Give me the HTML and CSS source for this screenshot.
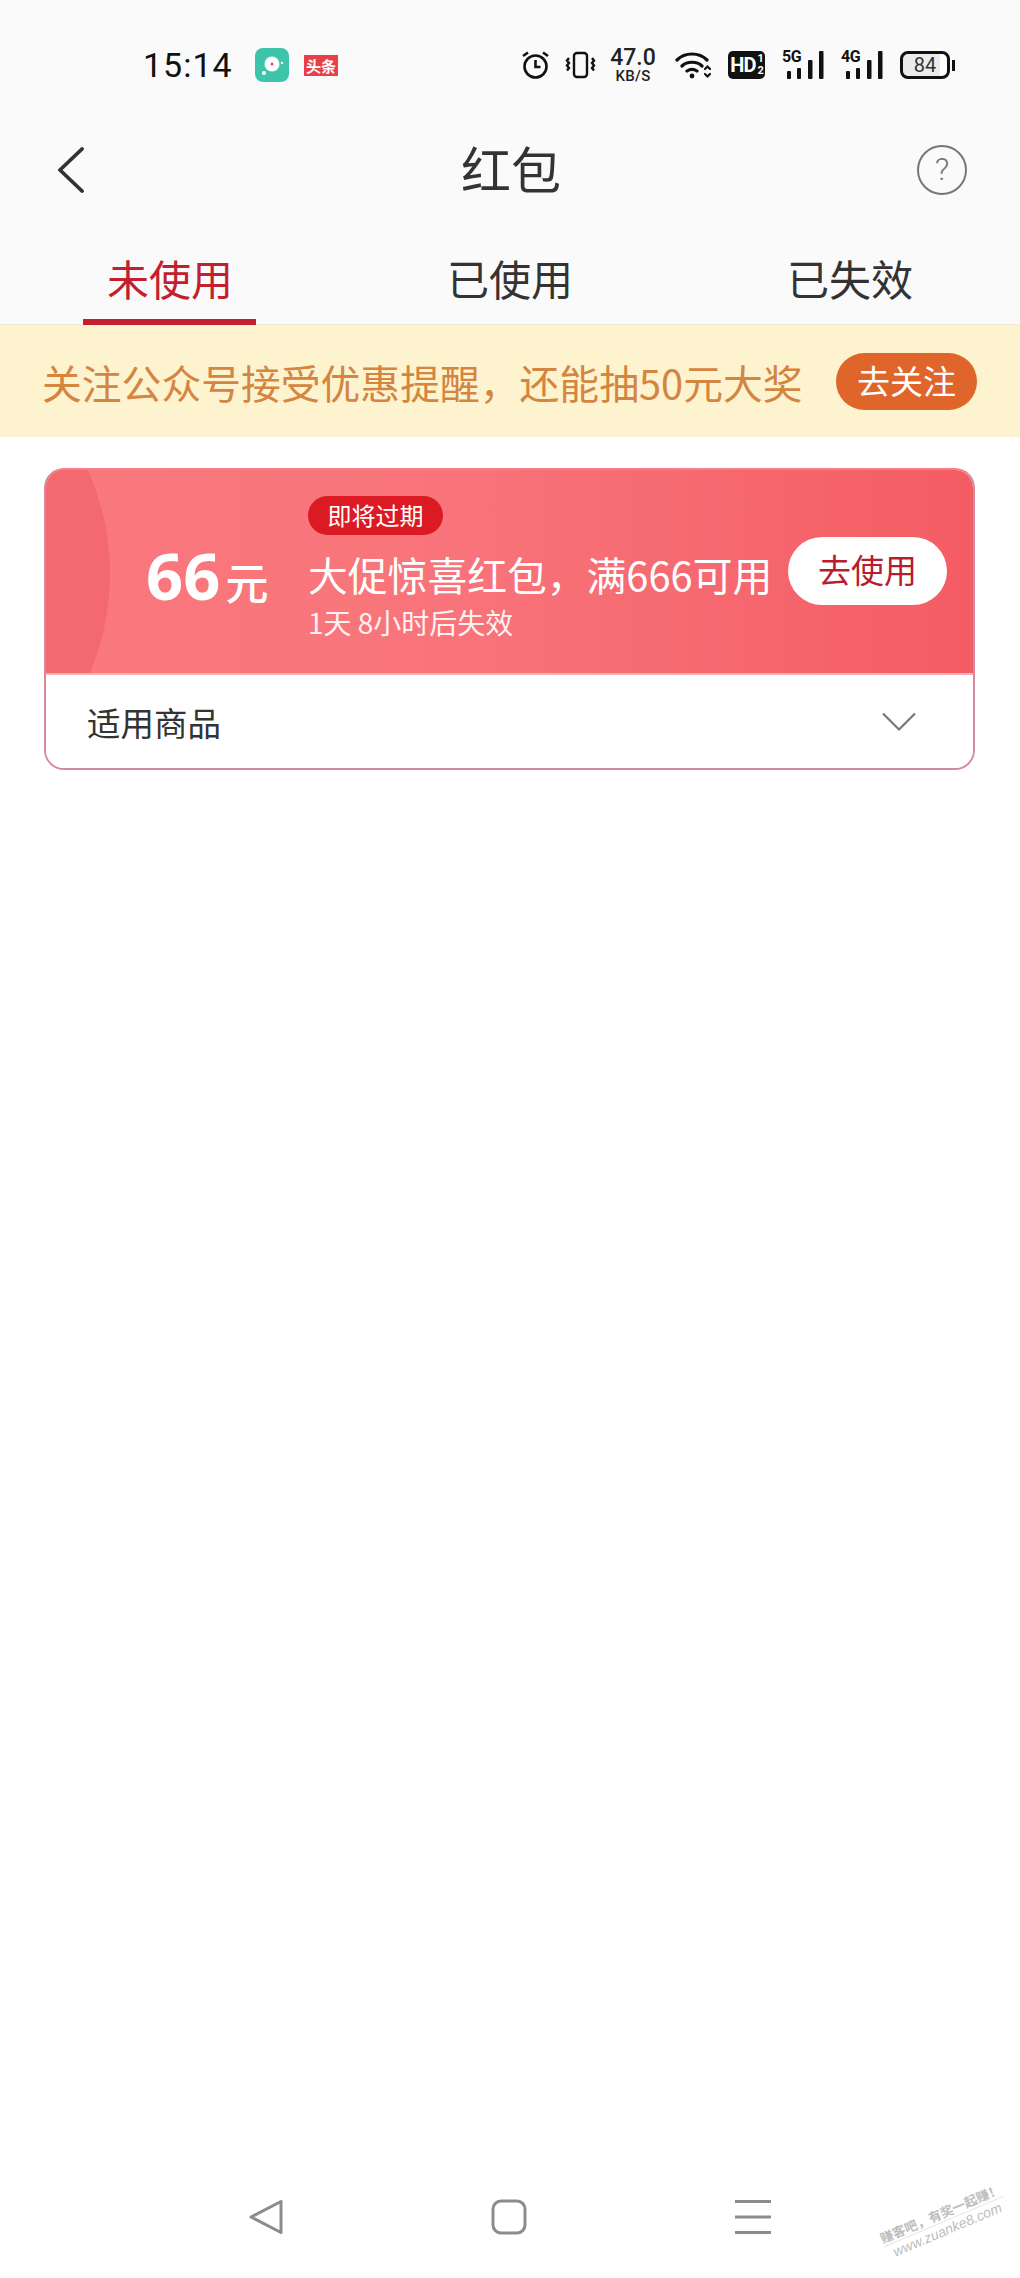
FILE: index.html
```html
<!DOCTYPE html>
<html lang="zh-CN">
<head>
    <meta charset="UTF-8">
    <meta name="viewport" content="width=device-width, initial-scale=1.0">
    <title>红包</title>
    <link rel="stylesheet" href="styles.css">
</head>
<body>
    <div class="page">
        <div class="header">
            <div class="status-bar">
                <div class="time">15:14</div>
                <svg class="app-icon" width="34" height="34" viewBox="0 0 34 34">
                    <rect width="34" height="34" rx="8" fill="#3fc4ac"/>
                    <circle cx="17" cy="16" r="7.5" fill="#fff"/>
                    <circle cx="17" cy="16" r="1.5" fill="#d9534f"/>
                    <circle cx="9" cy="25" r="2" fill="#fff"/>
                    <circle cx="27" cy="15" r="1.2" fill="#fff"/>
                </svg>
                <div class="news-tag">头条</div>
                <div class="status-icons">
                    <svg width="29" height="28" viewBox="0 0 29 28" fill="none" stroke="#111" stroke-width="2.6">
                        <circle cx="14.5" cy="15.5" r="11"/>
                        <path d="M14.5 9v7h5M2 5l5-3.500M27 5l-5-3.500"/>
                    </svg>
                    <svg width="31" height="28" viewBox="0 0 31 28" fill="none" stroke="#111" stroke-width="2.4">
                        <rect x="9" y="2" width="13" height="24" rx="3"/>
                        <path d="M4 7l-2 2.500 2 2.500-2 2.500 2 2.500-2 2.500M27 7l2 2.500-2 2.500 2 2.500-2 2.500 2 2.500"/>
                    </svg>
                    <div class="speed"><span class="speed-num">47.0</span><span class="speed-unit">KB/S</span></div>
                    <svg class="wifi" width="38" height="28" viewBox="0 0 38 28" fill="none" stroke="#111" stroke-width="3.2" stroke-linecap="round">
                        <path d="M2 9c8-8 22-8 30 0M7 15c5-5 15-5 20 0M12 20c3-2 7-2 10 0"/>
                        <circle cx="17" cy="25" r="2.400" fill="#111" stroke="none"/>
                        <path d="M30 18l2.500-2.500 2.500 2.500M30 23l2.500 2.500 2.500-2.500" stroke-width="2.200"/>
                    </svg>
                    <div class="hd-badge">HD<span class="hd-nums"><span>1</span><span>2</span></span></div>
                    <div class="signal">
                        <span class="signal-label">5G</span>
                        <svg width="42" height="28" viewBox="0 0 42 28" fill="#111">
                            <rect x="5" y="20" width="4" height="8" rx="1"/>
                            <rect x="15" y="17" width="4" height="11" rx="1"/>
                            <rect x="26" y="9" width="4.500" height="19" rx="1"/>
                            <rect x="37" y="0" width="4.500" height="28" rx="1"/>
                        </svg>
                    </div>
                    <div class="signal">
                        <span class="signal-label">4G</span>
                        <svg width="42" height="28" viewBox="0 0 42 28" fill="#111">
                            <rect x="5" y="20" width="4" height="8" rx="1"/>
                            <rect x="15" y="17" width="4" height="11" rx="1"/>
                            <rect x="26" y="9" width="4.500" height="19" rx="1"/>
                            <rect x="37" y="0" width="4.500" height="28" rx="1"/>
                        </svg>
                    </div>
                    <div class="battery"><div class="battery-body">84</div><div class="battery-nub"></div></div>
                </div>
            </div>
            <div class="title-bar">
                <svg class="back-icon" width="26" height="46" viewBox="0 0 26 46" fill="none" stroke="#333" stroke-width="3.800" stroke-linecap="round" stroke-linejoin="round">
                    <path d="M24 2L2 23l22 21"/>
                </svg>
                <div class="page-title">红包</div>
                <div class="help-icon">?</div>
            </div>
            <div class="tabs">
                <div class="tab active">未使用</div>
                <div class="tab">已使用</div>
                <div class="tab">已失效</div>
            </div>
        </div>

        <div class="notice">
            <div class="notice-text">关注公众号接受优惠提醒，还能抽50元大奖</div>
            <div class="notice-btn">去关注</div>
        </div>

        <div class="coupon">
            <div class="coupon-main">
                <div class="coupon-arc"></div>
                <div class="amount"><span class="amount-num">66</span><span class="amount-unit">元</span></div>
                <div class="coupon-info">
                    <div class="expire-tag">即将过期</div>
                    <div class="coupon-name">大促惊喜红包，满666可用</div>
                    <div class="coupon-time">1天 8小时后失效</div>
                </div>
                <div class="use-btn">去使用</div>
            </div>
            <div class="coupon-foot">
                <span>适用商品</span>
                <svg width="34" height="20" viewBox="0 0 34 20" fill="none" stroke="#777" stroke-width="2.200">
                    <path d="M1 1.500l16 16 16-16"/>
                </svg>
            </div>
        </div>

        <div class="nav-bar">
            <svg width="34" height="36" viewBox="0 0 34 36" fill="none" stroke="#8c8c8c" stroke-width="3" stroke-linejoin="round">
                <path d="M32 2.500v31L2 18z"/>
            </svg>
            <svg width="36" height="36" viewBox="0 0 36 36" fill="none" stroke="#8c8c8c" stroke-width="3">
                <rect x="2" y="2" width="32" height="32" rx="8"/>
            </svg>
            <svg width="36" height="36" viewBox="0 0 36 36" fill="none" stroke="#8c8c8c" stroke-width="3">
                <path d="M0 2.500h36M0 18h36M0 33.500h36"/>
            </svg>
        </div>

        <div class="watermark"><div class="wm-cn">赚客吧，有奖一起赚！</div><div class="wm-en">www.zuanke8.com</div></div>
    </div>
</body>
</html>
```

FILE: styles.css
```css
* {
    box-sizing: border-box;
}
body {
    font-family: "Noto Sans CJK SC", "Noto Sans", sans-serif;
    margin: 0;
    padding: 0;
    background-color: #fff;
}
.page {
    position: relative;
    height: 2278px;
    display: flex;
    flex-direction: column;
    overflow: hidden;
}
.header {
    background-color: #fafafa;
}
.status-bar {
    height: 100px;
    display: flex;
    align-items: center;
    padding: 30px 65px 0 143px;
}
.time {
    font-family: Roboto, sans-serif;
    font-size: 34px;
    color: #111;
    width: 112px;
    letter-spacing: 1px;
}
.news-tag {
    margin-left: 15px;
    width: 34px;
    height: 21px;
    background-color: #e8404a;
    color: #fff;
    font-size: 15px;
    font-weight: 700;
    line-height: 21px;
    text-align: center;
    white-space: nowrap;
}
.status-icons {
    margin-left: auto;
    display: flex;
    align-items: center;
}
.status-icons > svg {
    margin-right: 15px;
}
.speed {
    width: 44px;
    margin-right: 20px;
    display: flex;
    flex-direction: column;
    align-items: center;
    font-family: Roboto, sans-serif;
    color: #222;
    line-height: 1;
}
.speed-num {
    font-size: 23px;
    font-weight: 500;
    line-height: 22px;
}
.speed-unit {
    font-size: 15px;
    font-weight: 500;
    line-height: 15px;
    letter-spacing: 0.3px;
}
.hd-badge {
    width: 37px;
    height: 28px;
    margin-right: 17px;
    background-color: #111;
    border-radius: 5px;
    color: #fff;
    font-family: Roboto, sans-serif;
    font-size: 20px;
    font-weight: 700;
    line-height: 28px;
    display: flex;
    justify-content: center;
    letter-spacing: -1px;
}
.hd-nums {
    display: flex;
    flex-direction: column;
    font-size: 11px;
    line-height: 12px;
    margin: 2px 0 0 2px;
}
.signal {
    position: relative;
    width: 42px;
    margin-right: 17px;
}
.signal svg {
    display: block;
}
.signal-label {
    position: absolute;
    left: 0;
    top: -3px;
    font-family: Roboto, sans-serif;
    font-size: 16px;
    font-weight: 700;
    line-height: 18px;
    letter-spacing: -0.5px;
    color: #111;
}
.battery {
    display: flex;
    align-items: center;
    gap: 2px;
}
.battery-body {
    width: 50px;
    height: 28px;
    border: 3px solid #111;
    border-radius: 8px;
    background: linear-gradient(90deg, #ececec 84%, #fff 84%);
    font-family: Roboto, sans-serif;
    font-size: 20px;
    line-height: 22px;
    text-align: center;
    color: #333;
}
.battery-nub {
    width: 3px;
    height: 11px;
    background-color: #111;
}
.title-bar {
    height: 140px;
    display: grid;
    grid-template-columns: 1fr auto 1fr;
    align-items: center;
    padding: 0 53px 0 58px;
}
.page-title {
    font-size: 50px;
    line-height: 60px;
    color: #333;
    margin: 0 3px 6px 0;
}
.help-icon {
    justify-self: end;
    width: 50px;
    height: 50px;
    border: 2.500px solid #777;
    border-radius: 50%;
    color: #777;
    font-family: Roboto, sans-serif;
    font-weight: 300;
    font-size: 32px;
    line-height: 44px;
    text-align: center;
}
.tabs {
    height: 85px;
    display: grid;
    grid-template-columns: repeat(3, 1fr);
    border-bottom: 1px solid #ececdc;
}
.tab {
    font-size: 42px;
    color: #333;
    line-height: 76px;
    text-align: center;
    position: relative;
}
.tab.active {
    color: #c3202f;
}
.tab.active::after {
    content: "";
    position: absolute;
    left: 83px;
    bottom: -1px;
    width: 173px;
    height: 6px;
    background-color: #c3202f;
}
.notice {
    height: 112px;
    background-color: #fdf3cf;
    display: flex;
    align-items: center;
    justify-content: space-between;
    padding: 0 43px 0 42px;
}
.notice-text {
    font-size: 39.800px;
    color: #d4853f;
    white-space: nowrap;
}
.notice-btn {
    width: 141px;
    height: 57px;
    border-radius: 29px;
    background-color: #e0652a;
    color: #fff;
    font-size: 33px;
    line-height: 55px;
    text-align: center;
}
.coupon {
    margin: 31px 45px 0 44px;
    height: 302px;
    border: 2px solid #d6899a;
    border-top-color: #f57f85;
    border-radius: 20px;
    overflow: hidden;
}
.coupon-main {
    position: relative;
    height: 205px;
    margin: 0 -2px;
    padding-right: 28px;
    display: flex;
    align-items: center;
    color: #fff;
    background: linear-gradient(90deg, #fa797d 0%, #f8747a 45%, #f45c64 100%);
    border-bottom: 2px solid #f7b0b4;
    overflow: hidden;
}
.coupon-arc {
    position: absolute;
    left: -442px;
    top: -150px;
    width: 508px;
    height: 508px;
    border-radius: 50%;
    background-color: #f3696f;
}
.amount {
    position: relative;
    width: 264px;
    padding-left: 102px;
    padding-top: 6px;
    display: flex;
    align-items: baseline;
    white-space: nowrap;
}
.amount-num {
    font-family: "Noto Sans", sans-serif;
    font-size: 65px;
    font-weight: 700;
    margin-right: 5px;
}
.amount-unit {
    font-size: 43px;
    font-weight: 500;
}
.coupon-info {
    align-self: flex-start;
    padding-top: 26px;
    position: relative;
}
.expire-tag {
    width: 135px;
    height: 39px;
    border-radius: 20px;
    background-color: #dc1a24;
    font-size: 24px;
    line-height: 37px;
    text-align: center;
}
.coupon-name {
    margin-top: 13px;
    font-size: 39.800px;
    line-height: 52px;
    white-space: nowrap;
}
.coupon-time {
    margin-top: 4px;
    font-size: 28px;
    line-height: 36px;
    opacity: 0.9;
    white-space: nowrap;
}
.use-btn {
    position: relative;
    margin-left: auto;
    width: 159px;
    height: 68px;
    margin-bottom: 1px;
    border-radius: 34px;
    background-color: #fff;
    color: #b71c2f;
    font-size: 33px;
    line-height: 64px;
    text-align: center;
}
.coupon-foot {
    height: 93px;
    padding: 0 57px 0 41px;
    display: flex;
    align-items: center;
    justify-content: space-between;
    font-size: 33.500px;
    color: #333;
    background-color: #fff;
}
.nav-bar {
    margin-top: auto;
    height: 108px;
    padding: 29px 249px 0 249px;
    display: flex;
    align-items: flex-start;
    justify-content: space-between;
}
.watermark {
    position: absolute;
    left: 879px;
    top: 2204px;
    transform: rotate(-23deg);
    color: #bdbdbd;
    line-height: 17px;
    white-space: nowrap;
    text-align: center;
}
.wm-cn {
    font-size: 13px;
    font-weight: 700;
    border-bottom: 1px solid #e2e2e2;
}
.wm-en {
    font-family: "Liberation Sans", sans-serif;
    font-size: 14px;
    font-style: italic;
}
```
